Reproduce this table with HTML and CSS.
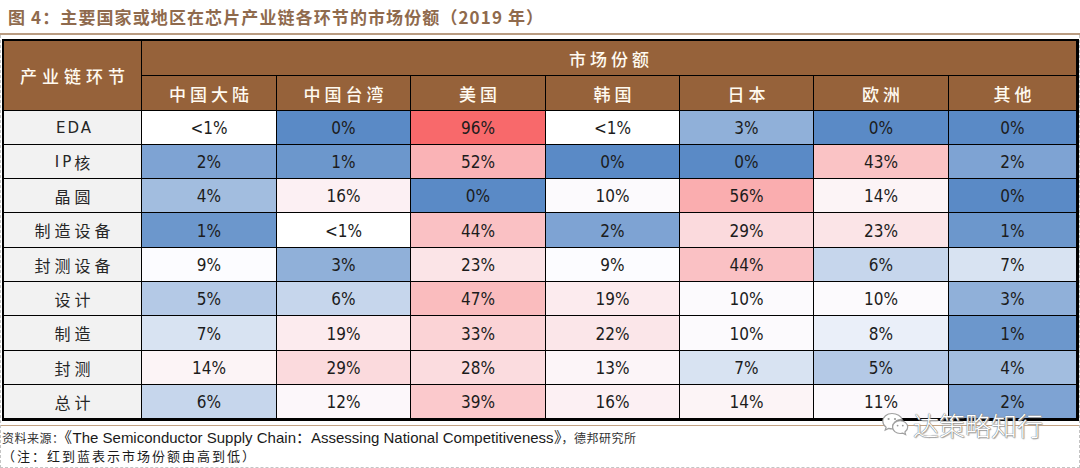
FILE: index.html
```html
<!DOCTYPE html>
<html lang="zh-CN">
<head>
<meta charset="utf-8">
<title>图 4</title>
<link rel="stylesheet" href="styles.css">
</head>
<body>
<div class="page">
  <div class="title">图 4：主要国家或地区在芯片产业链各环节的市场份额（2019 年）</div>
  <div class="frame">
    <div class="grid">
      <div class="hd corner">产业链环节</div>
      <div class="hd market">市场份额</div>
      <div class="hd">中国大陆</div>
      <div class="hd">中国台湾</div>
      <div class="hd">美国</div>
      <div class="hd">韩国</div>
      <div class="hd">日本</div>
      <div class="hd">欧洲</div>
      <div class="hd">其他</div>

      <div class="lbl latin">EDA</div>
      <div class="cell w">&lt;1%</div><div class="cell b0">0%</div><div class="cell r96">96%</div><div class="cell w">&lt;1%</div><div class="cell b3">3%</div><div class="cell b0">0%</div><div class="cell b0">0%</div>

      <div class="lbl"><span class="latin">IP</span>核</div>
      <div class="cell b2">2%</div><div class="cell b1">1%</div><div class="cell r52">52%</div><div class="cell b0">0%</div><div class="cell b0">0%</div><div class="cell r43">43%</div><div class="cell b2">2%</div>

      <div class="lbl">晶圆</div>
      <div class="cell b4">4%</div><div class="cell r16">16%</div><div class="cell b0">0%</div><div class="cell r10">10%</div><div class="cell r56">56%</div><div class="cell r14">14%</div><div class="cell b0">0%</div>

      <div class="lbl">制造设备</div>
      <div class="cell b1">1%</div><div class="cell w">&lt;1%</div><div class="cell r44">44%</div><div class="cell b2">2%</div><div class="cell r29">29%</div><div class="cell r23">23%</div><div class="cell b1">1%</div>

      <div class="lbl">封测设备</div>
      <div class="cell b9">9%</div><div class="cell b3">3%</div><div class="cell r23">23%</div><div class="cell b9">9%</div><div class="cell r44">44%</div><div class="cell b6">6%</div><div class="cell b7">7%</div>

      <div class="lbl">设计</div>
      <div class="cell b5">5%</div><div class="cell b6">6%</div><div class="cell r47">47%</div><div class="cell r19">19%</div><div class="cell r10">10%</div><div class="cell r10">10%</div><div class="cell b3">3%</div>

      <div class="lbl">制造</div>
      <div class="cell b7">7%</div><div class="cell r19">19%</div><div class="cell r33">33%</div><div class="cell r22">22%</div><div class="cell r10">10%</div><div class="cell b8">8%</div><div class="cell b1">1%</div>

      <div class="lbl">封测</div>
      <div class="cell r14">14%</div><div class="cell r29">29%</div><div class="cell r28">28%</div><div class="cell r13">13%</div><div class="cell b7">7%</div><div class="cell b5">5%</div><div class="cell b4">4%</div>

      <div class="lbl">总计</div>
      <div class="cell b6">6%</div><div class="cell r12">12%</div><div class="cell r39">39%</div><div class="cell r16">16%</div><div class="cell r14">14%</div><div class="cell r11">11%</div><div class="cell b2">2%</div>
    </div>

    <div class="foot">
      <p class="src"><span class="cn">资料来源：</span>《The Semiconductor Supply Chain：Assessing National Competitiveness》<span class="cn">，德邦研究所</span></p>
      <p class="note">（注：红到蓝表示市场份额由高到低）</p>
    </div>

    <div class="watermark">
      <svg class="wx" width="28" height="28" viewBox="0 0 28 28">
        <path d="M11 2.5c-5.2 0-9.2 3.5-9.2 7.8 0 2.4 1.3 4.5 3.3 5.9l-0.9 2.9 3.4-1.7c1.1 0.3 2.2 0.5 3.4 0.5 0.3 0 0.6 0 0.9 0-0.2-0.6-0.3-1.3-0.3-2 0-4.1 3.8-7.3 8.6-7.3 0.3 0 0.6 0 0.9 0C20.2 5.1 16 2.5 11 2.5z" fill="#fff" stroke="#a0a0a0" stroke-width="1.2"/>
        <path d="M19.2 9.7c-4.3 0-7.6 2.9-7.6 6.4s3.3 6.4 7.6 6.4c0.9 0 1.8-0.1 2.6-0.4l2.8 1.4-0.7-2.4c1.7-1.2 2.8-3 2.8-5 0-3.5-3.4-6.4-7.5-6.4z" fill="#fff" stroke="#a0a0a0" stroke-width="1.2"/>
        <circle cx="7.6" cy="8" r="1.1" fill="#9a9a9a"/>
        <circle cx="14" cy="8" r="1.1" fill="#9a9a9a"/>
        <circle cx="16.6" cy="14.6" r="0.9" fill="#9a9a9a"/>
        <circle cx="21.8" cy="14.6" r="0.9" fill="#9a9a9a"/>
      </svg>
      <span class="wm-text">达策略知行</span>
    </div>
  </div>
</div>
</body>
</html>
```

FILE: styles.css
```css
* { box-sizing: border-box; }

html, body {
  margin: 0;
  padding: 0;
  background: #ffffff;
}

.page {
  width: 1080px;
  height: 468px;
  overflow: hidden;
  font-family: "Noto Sans CJK SC", "Liberation Sans", sans-serif;
}

.title {
  height: 35px;
  line-height: 33px;
  padding-left: 8px;
  border-bottom: 2px solid #b99c82;
  color: #8f6a4d;
  font-size: 17px;
  font-weight: 700;
  letter-spacing: 1.1px;
  white-space: nowrap;
}

.frame {
  position: relative;
  height: 433px;
  padding-top: 4px;
  border-left: 1px dashed #c4c4c4;
  border-right: 1px dashed #c4c4c4;
  border-bottom: 1px dashed #c4c4c4;
}

.grid {
  display: grid;
  grid-template-columns: 137px 134px 133px 134px 133px 133px 134px 127px;
  grid-template-rows: 34px 34px 33px 33px 33px 34px 33px 33px 34px 33px 33px;
  gap: 1px;
  width: 1077px;
  margin-left: 1px;
  background: #000;
  border: 2px solid #000;
  border-bottom-width: 3px;
}

.grid > div {
  display: flex;
  align-items: center;
  justify-content: center;
  white-space: nowrap;
}

.hd {
  background: #96623a;
  color: #fffaf0;
  font-size: 17px;
  font-weight: 500;
  letter-spacing: 4px;
  padding-left: 4px;
}

.corner {
  grid-row: 1 / span 2;
  letter-spacing: 5px;
  padding-left: 5px;
}

.market {
  grid-column: 2 / span 7;
}

.lbl {
  background: #f2f2f2;
  color: #262626;
  font-size: 16px;
  letter-spacing: 4px;
  padding-left: 4px;
}

.latin {
  font-family: "DejaVu Sans", "Liberation Sans", sans-serif;
  font-size: 15px;
  letter-spacing: 2px;
}

.lbl .latin {
  letter-spacing: 3px;
}

.cell {
  font-family: "Liberation Sans Narrow", "DejaVu Sans Condensed", "Liberation Sans", sans-serif;
  font-size: 17px;
  color: #1c1c1c;
  padding-top: 1px;
}

/* colour scale: red (high) - white - blue (low) */
.w   { background: #ffffff; }
.b0  { background: rgb(90,138,198); }
.b1  { background: rgb(108,151,204); }
.b2  { background: rgb(126,163,211); }
.b3  { background: rgb(144,176,217); }
.b4  { background: rgb(162,189,223); }
.b5  { background: rgb(180,201,230); }
.b6  { background: rgb(198,214,236); }
.b7  { background: rgb(216,227,242); }
.b8  { background: rgb(234,239,249); }
.b9  { background: rgb(252,252,255); }
.r10 { background: rgb(252,250,253); }
.r11 { background: rgb(252,249,252); }
.r12 { background: rgb(252,247,250); }
.r13 { background: rgb(252,245,248); }
.r14 { background: rgb(252,244,246); }
.r16 { background: rgb(252,240,243); }
.r19 { background: rgb(252,235,238); }
.r22 { background: rgb(251,230,233); }
.r23 { background: rgb(251,228,231); }
.r28 { background: rgb(251,220,223); }
.r29 { background: rgb(251,218,221); }
.r33 { background: rgb(251,211,214); }
.r39 { background: rgb(251,201,204); }
.r43 { background: rgb(250,195,197); }
.r44 { background: rgb(250,193,196); }
.r47 { background: rgb(250,188,190); }
.r52 { background: rgb(250,179,182); }
.r56 { background: rgb(250,173,175); }
.r96 { background: rgb(248,105,107); }

.foot {
  margin-top: 4px;
  border-top: 1px solid #c2a283;
  padding-top: 3px;
  padding-left: 1px;
}

.foot p {
  margin: 0;
  height: 18px;
  line-height: 18px;
  white-space: nowrap;
  color: #1a1a1a;
}

.src {
  font-family: "Liberation Sans", sans-serif;
  font-size: 15px;
}

.cn {
  font-family: "Noto Sans CJK SC", sans-serif;
  font-size: 12px;
  letter-spacing: 0.5px;
  color: #333;
}

.note {
  font-family: "Noto Sans CJK SC", sans-serif;
  font-size: 13px;
  letter-spacing: 2px;
}

.watermark {
  position: absolute;
  left: 880px;
  top: 371px;
  display: flex;
  align-items: center;
  gap: 4px;
}

.wm-text {
  font-family: "Noto Sans CJK SC", sans-serif;
  font-size: 26px;
  font-weight: 300;
  color: #ffffff;
  text-shadow: 0 0 1px #6f6f6f, 0 0 1px #6f6f6f, 1px 1px 1px #a8a8a8;
}
```
